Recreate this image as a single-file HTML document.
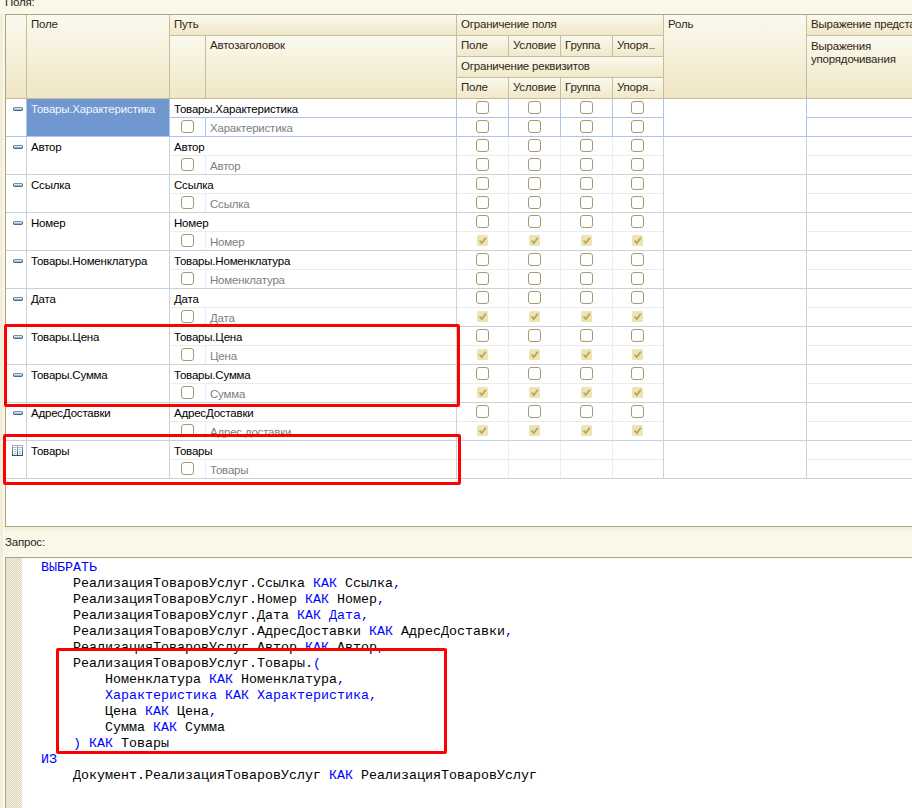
<!DOCTYPE html><html><head><meta charset="utf-8"><style>
*{margin:0;padding:0;box-sizing:border-box}
html,body{width:912px;height:808px;overflow:hidden;background:#FAF8E9;position:relative;font-family:"Liberation Sans",sans-serif;font-size:11.5px;letter-spacing:-0.2px;color:#000}
div{position:absolute}
.h{background:linear-gradient(#FAF9EE,#EFE6C5);color:#2E2616;white-space:nowrap;overflow:hidden}
.hs{background:linear-gradient(#FAF9EE,#F0E8C9);color:#2E2616;white-space:nowrap;overflow:hidden}
.t{white-space:nowrap;line-height:15px}
.g{color:#7E7E7E}
.cb{width:13px;height:13px;border:1.5px solid #A39A72;border-radius:3px;background:#fff}
.ck{width:11px;height:11px;background:#EDE4B2;border-radius:1.5px}
.ln{background:#C9D1DA}
.ll{background:#ECECEC}
.code{font-family:"Liberation Mono",monospace;font-size:13.333px;letter-spacing:0;line-height:16px;white-space:pre;color:#000}
.k{color:#0000FF}
.red{border:3px solid #FF0000;border-radius:2px}
</style></head><body>
<div class="t" style="left:5px;top:-5px;color:#2A2418">Поля:</div>
<div style="left:0;top:14px;width:3px;height:794px;background:#F1EEDB"></div>
<div style="left:5px;top:14px;width:907px;height:513px;background:#fff;border:1px solid #ADA37D;border-right:none"></div>
<div class="h" style="left:6px;top:15px;width:21px;height:84px;border-right:1px solid #C7BD9A;border-bottom:1px solid #C7BD9A;"></div>
<div class="h" style="left:27px;top:15px;width:143px;height:84px;border-right:1px solid #C7BD9A;border-bottom:1px solid #C7BD9A;"><div class="t" style="left:4px;top:2px">Поле</div></div>
<div class="hs" style="left:170px;top:15px;width:287px;height:21px;border-right:1px solid #C7BD9A;border-bottom:1px solid #C7BD9A;"><div class="t" style="left:4px;top:2px">Путь</div></div>
<div class="h" style="left:170px;top:36px;width:36px;height:63px;border-right:1px solid #C7BD9A;border-bottom:1px solid #C7BD9A;"></div>
<div class="h" style="left:206px;top:36px;width:251px;height:63px;border-right:1px solid #C7BD9A;border-bottom:1px solid #C7BD9A;"><div class="t" style="left:4px;top:2px">Автозаголовок</div></div>
<div class="hs" style="left:457px;top:15px;width:207px;height:21px;border-right:1px solid #C7BD9A;border-bottom:1px solid #C7BD9A;"><div class="t" style="left:4px;top:2px">Ограничение поля</div></div>
<div class="hs" style="left:457px;top:36px;width:52px;height:21px;border-right:1px solid #C7BD9A;border-bottom:1px solid #C7BD9A;"><div class="t" style="left:4px;top:2px">Поле</div></div>
<div class="hs" style="left:509px;top:36px;width:52px;height:21px;border-right:1px solid #C7BD9A;border-bottom:1px solid #C7BD9A;"><div class="t" style="left:4px;top:2px">Условие</div></div>
<div class="hs" style="left:561px;top:36px;width:52px;height:21px;border-right:1px solid #C7BD9A;border-bottom:1px solid #C7BD9A;"><div class="t" style="left:4px;top:2px">Группа</div></div>
<div class="hs" style="left:613px;top:36px;width:51px;height:21px;border-right:1px solid #C7BD9A;border-bottom:1px solid #C7BD9A;"><div class="t" style="left:4px;top:2px">Упоря<span style="display:inline-block;width:6px;height:1px;background:#A89C80;vertical-align:baseline;margin-left:1px"></span></div></div>
<div class="hs" style="left:457px;top:57px;width:207px;height:21px;border-right:1px solid #C7BD9A;border-bottom:1px solid #C7BD9A;"><div class="t" style="left:4px;top:2px">Ограничение реквизитов</div></div>
<div class="hs" style="left:457px;top:78px;width:52px;height:21px;border-right:1px solid #C7BD9A;border-bottom:1px solid #C7BD9A;"><div class="t" style="left:4px;top:2px">Поле</div></div>
<div class="hs" style="left:509px;top:78px;width:52px;height:21px;border-right:1px solid #C7BD9A;border-bottom:1px solid #C7BD9A;"><div class="t" style="left:4px;top:2px">Условие</div></div>
<div class="hs" style="left:561px;top:78px;width:52px;height:21px;border-right:1px solid #C7BD9A;border-bottom:1px solid #C7BD9A;"><div class="t" style="left:4px;top:2px">Группа</div></div>
<div class="hs" style="left:613px;top:78px;width:51px;height:21px;border-right:1px solid #C7BD9A;border-bottom:1px solid #C7BD9A;"><div class="t" style="left:4px;top:2px">Упоря<span style="display:inline-block;width:6px;height:1px;background:#A89C80;vertical-align:baseline;margin-left:1px"></span></div></div>
<div class="h" style="left:664px;top:15px;width:143px;height:84px;border-right:1px solid #C7BD9A;border-bottom:1px solid #C7BD9A;"><div class="t" style="left:4px;top:2px">Роль</div></div>
<div class="hs" style="left:807px;top:15px;width:114px;height:21px;border-right:1px solid #C7BD9A;border-bottom:1px solid #C7BD9A;"><div class="t" style="left:4px;top:2px">Выражение представления</div></div>
<div class="h" style="left:807px;top:36px;width:114px;height:63px;border-bottom:1px solid #C7BD9A"><div class="t" style="left:4px;top:4px;line-height:13px">Выражения<br>упорядочивания</div></div>
<div style="left:6px;top:136px;width:906px;height:1px;background:#ABC6EA"></div>
<div style="left:170px;top:117px;width:493px;height:1px;background:#ABC6EA"></div>
<div style="left:807px;top:117px;width:105px;height:1px;background:#ABC6EA"></div>
<div style="left:26px;top:99px;width:1px;height:37px;background:#ABC6EA"></div>
<div style="left:169px;top:99px;width:1px;height:37px;background:#ABC6EA"></div>
<div style="left:456px;top:99px;width:1px;height:37px;background:#ABC6EA"></div>
<div style="left:663px;top:99px;width:1px;height:37px;background:#ABC6EA"></div>
<div style="left:806px;top:99px;width:1px;height:37px;background:#ABC6EA"></div>
<div style="left:508px;top:99px;width:1px;height:37px;background:#ABC6EA"></div>
<div style="left:560px;top:99px;width:1px;height:37px;background:#ABC6EA"></div>
<div style="left:612px;top:99px;width:1px;height:37px;background:#ABC6EA"></div>
<div style="left:205px;top:118px;width:1px;height:18px;background:#ABC6EA"></div>
<div style="left:27px;top:99px;width:142px;height:37px;background:#6E98CF"></div>
<svg style="position:absolute;left:13px;top:107px" width="10" height="4" shape-rendering="crispEdges"><rect x="1" y="0" width="8" height="1" fill="#7591AB"/><rect x="0" y="1" width="1" height="2" fill="#56728E"/><rect x="9" y="1" width="1" height="2" fill="#56728E"/><rect x="1" y="1" width="8" height="1" fill="#D9E6F2"/><rect x="1" y="2" width="8" height="1" fill="#9BB3C9"/><rect x="1" y="3" width="8" height="1" fill="#4E6B87"/><rect x="0" y="0" width="1" height="1" fill="#C5D0DA"/><rect x="9" y="0" width="1" height="1" fill="#C5D0DA"/><rect x="0" y="3" width="1" height="1" fill="#B5C2CF"/><rect x="9" y="3" width="1" height="1" fill="#B5C2CF"/></svg>
<div class="t" style="left:31px;top:102px;color:#F4F7FC">Товары.Характеристика</div>
<div class="t" style="left:174px;top:102px">Товары.Характеристика</div>
<div class="t g" style="left:210px;top:121px">Характеристика</div>
<div class="cb" style="left:181px;top:120px"></div>
<div class="cb" style="left:476px;top:101px"></div>
<div class="cb" style="left:528px;top:101px"></div>
<div class="cb" style="left:580px;top:101px"></div>
<div class="cb" style="left:631px;top:101px"></div>
<div class="cb" style="left:476px;top:120px"></div>
<div class="cb" style="left:528px;top:120px"></div>
<div class="cb" style="left:580px;top:120px"></div>
<div class="cb" style="left:631px;top:120px"></div>
<div style="left:6px;top:174px;width:906px;height:1px;background:#C9D1DA"></div>
<div style="left:170px;top:155px;width:493px;height:1px;background:#ECECEC"></div>
<div style="left:807px;top:155px;width:105px;height:1px;background:#ECECEC"></div>
<div style="left:26px;top:137px;width:1px;height:37px;background:#C9D1DA"></div>
<div style="left:169px;top:137px;width:1px;height:37px;background:#C9D1DA"></div>
<div style="left:456px;top:137px;width:1px;height:37px;background:#C9D1DA"></div>
<div style="left:663px;top:137px;width:1px;height:37px;background:#C9D1DA"></div>
<div style="left:806px;top:137px;width:1px;height:37px;background:#C9D1DA"></div>
<div style="left:508px;top:137px;width:1px;height:37px;background:#ECECEC"></div>
<div style="left:560px;top:137px;width:1px;height:37px;background:#ECECEC"></div>
<div style="left:612px;top:137px;width:1px;height:37px;background:#ECECEC"></div>
<div style="left:205px;top:156px;width:1px;height:18px;background:#ECECEC"></div>
<svg style="position:absolute;left:13px;top:145px" width="10" height="4" shape-rendering="crispEdges"><rect x="1" y="0" width="8" height="1" fill="#7591AB"/><rect x="0" y="1" width="1" height="2" fill="#56728E"/><rect x="9" y="1" width="1" height="2" fill="#56728E"/><rect x="1" y="1" width="8" height="1" fill="#D9E6F2"/><rect x="1" y="2" width="8" height="1" fill="#9BB3C9"/><rect x="1" y="3" width="8" height="1" fill="#4E6B87"/><rect x="0" y="0" width="1" height="1" fill="#C5D0DA"/><rect x="9" y="0" width="1" height="1" fill="#C5D0DA"/><rect x="0" y="3" width="1" height="1" fill="#B5C2CF"/><rect x="9" y="3" width="1" height="1" fill="#B5C2CF"/></svg>
<div class="t" style="left:31px;top:140px;color:#000">Автор</div>
<div class="t" style="left:174px;top:140px">Автор</div>
<div class="t g" style="left:210px;top:159px">Автор</div>
<div class="cb" style="left:181px;top:158px"></div>
<div class="cb" style="left:476px;top:139px"></div>
<div class="cb" style="left:528px;top:139px"></div>
<div class="cb" style="left:580px;top:139px"></div>
<div class="cb" style="left:631px;top:139px"></div>
<div class="cb" style="left:476px;top:158px"></div>
<div class="cb" style="left:528px;top:158px"></div>
<div class="cb" style="left:580px;top:158px"></div>
<div class="cb" style="left:631px;top:158px"></div>
<div style="left:6px;top:212px;width:906px;height:1px;background:#C9D1DA"></div>
<div style="left:170px;top:193px;width:493px;height:1px;background:#ECECEC"></div>
<div style="left:807px;top:193px;width:105px;height:1px;background:#ECECEC"></div>
<div style="left:26px;top:175px;width:1px;height:37px;background:#C9D1DA"></div>
<div style="left:169px;top:175px;width:1px;height:37px;background:#C9D1DA"></div>
<div style="left:456px;top:175px;width:1px;height:37px;background:#C9D1DA"></div>
<div style="left:663px;top:175px;width:1px;height:37px;background:#C9D1DA"></div>
<div style="left:806px;top:175px;width:1px;height:37px;background:#C9D1DA"></div>
<div style="left:508px;top:175px;width:1px;height:37px;background:#ECECEC"></div>
<div style="left:560px;top:175px;width:1px;height:37px;background:#ECECEC"></div>
<div style="left:612px;top:175px;width:1px;height:37px;background:#ECECEC"></div>
<div style="left:205px;top:194px;width:1px;height:18px;background:#ECECEC"></div>
<svg style="position:absolute;left:13px;top:183px" width="10" height="4" shape-rendering="crispEdges"><rect x="1" y="0" width="8" height="1" fill="#7591AB"/><rect x="0" y="1" width="1" height="2" fill="#56728E"/><rect x="9" y="1" width="1" height="2" fill="#56728E"/><rect x="1" y="1" width="8" height="1" fill="#D9E6F2"/><rect x="1" y="2" width="8" height="1" fill="#9BB3C9"/><rect x="1" y="3" width="8" height="1" fill="#4E6B87"/><rect x="0" y="0" width="1" height="1" fill="#C5D0DA"/><rect x="9" y="0" width="1" height="1" fill="#C5D0DA"/><rect x="0" y="3" width="1" height="1" fill="#B5C2CF"/><rect x="9" y="3" width="1" height="1" fill="#B5C2CF"/></svg>
<div class="t" style="left:31px;top:178px;color:#000">Ссылка</div>
<div class="t" style="left:174px;top:178px">Ссылка</div>
<div class="t g" style="left:210px;top:197px">Ссылка</div>
<div class="cb" style="left:181px;top:196px"></div>
<div class="cb" style="left:476px;top:177px"></div>
<div class="cb" style="left:528px;top:177px"></div>
<div class="cb" style="left:580px;top:177px"></div>
<div class="cb" style="left:631px;top:177px"></div>
<div class="cb" style="left:476px;top:196px"></div>
<div class="cb" style="left:528px;top:196px"></div>
<div class="cb" style="left:580px;top:196px"></div>
<div class="cb" style="left:631px;top:196px"></div>
<div style="left:6px;top:250px;width:906px;height:1px;background:#C9D1DA"></div>
<div style="left:170px;top:231px;width:493px;height:1px;background:#ECECEC"></div>
<div style="left:807px;top:231px;width:105px;height:1px;background:#ECECEC"></div>
<div style="left:26px;top:213px;width:1px;height:37px;background:#C9D1DA"></div>
<div style="left:169px;top:213px;width:1px;height:37px;background:#C9D1DA"></div>
<div style="left:456px;top:213px;width:1px;height:37px;background:#C9D1DA"></div>
<div style="left:663px;top:213px;width:1px;height:37px;background:#C9D1DA"></div>
<div style="left:806px;top:213px;width:1px;height:37px;background:#C9D1DA"></div>
<div style="left:508px;top:213px;width:1px;height:37px;background:#ECECEC"></div>
<div style="left:560px;top:213px;width:1px;height:37px;background:#ECECEC"></div>
<div style="left:612px;top:213px;width:1px;height:37px;background:#ECECEC"></div>
<div style="left:205px;top:232px;width:1px;height:18px;background:#ECECEC"></div>
<svg style="position:absolute;left:13px;top:221px" width="10" height="4" shape-rendering="crispEdges"><rect x="1" y="0" width="8" height="1" fill="#7591AB"/><rect x="0" y="1" width="1" height="2" fill="#56728E"/><rect x="9" y="1" width="1" height="2" fill="#56728E"/><rect x="1" y="1" width="8" height="1" fill="#D9E6F2"/><rect x="1" y="2" width="8" height="1" fill="#9BB3C9"/><rect x="1" y="3" width="8" height="1" fill="#4E6B87"/><rect x="0" y="0" width="1" height="1" fill="#C5D0DA"/><rect x="9" y="0" width="1" height="1" fill="#C5D0DA"/><rect x="0" y="3" width="1" height="1" fill="#B5C2CF"/><rect x="9" y="3" width="1" height="1" fill="#B5C2CF"/></svg>
<div class="t" style="left:31px;top:216px;color:#000">Номер</div>
<div class="t" style="left:174px;top:216px">Номер</div>
<div class="t g" style="left:210px;top:235px">Номер</div>
<div class="cb" style="left:181px;top:234px"></div>
<div class="cb" style="left:476px;top:215px"></div>
<div class="cb" style="left:528px;top:215px"></div>
<div class="cb" style="left:580px;top:215px"></div>
<div class="cb" style="left:631px;top:215px"></div>
<div class="ck" style="left:477px;top:235px"><svg width="11" height="11" style="position:absolute;left:0;top:0"><path d="M2.5 5.5 L4.8 8 L8.8 2.8" fill="none" stroke="#B3A462" stroke-width="1.8"/></svg></div>
<div class="ck" style="left:529px;top:235px"><svg width="11" height="11" style="position:absolute;left:0;top:0"><path d="M2.5 5.5 L4.8 8 L8.8 2.8" fill="none" stroke="#B3A462" stroke-width="1.8"/></svg></div>
<div class="ck" style="left:581px;top:235px"><svg width="11" height="11" style="position:absolute;left:0;top:0"><path d="M2.5 5.5 L4.8 8 L8.8 2.8" fill="none" stroke="#B3A462" stroke-width="1.8"/></svg></div>
<div class="ck" style="left:632px;top:235px"><svg width="11" height="11" style="position:absolute;left:0;top:0"><path d="M2.5 5.5 L4.8 8 L8.8 2.8" fill="none" stroke="#B3A462" stroke-width="1.8"/></svg></div>
<div style="left:6px;top:288px;width:906px;height:1px;background:#C9D1DA"></div>
<div style="left:170px;top:269px;width:493px;height:1px;background:#ECECEC"></div>
<div style="left:807px;top:269px;width:105px;height:1px;background:#ECECEC"></div>
<div style="left:26px;top:251px;width:1px;height:37px;background:#C9D1DA"></div>
<div style="left:169px;top:251px;width:1px;height:37px;background:#C9D1DA"></div>
<div style="left:456px;top:251px;width:1px;height:37px;background:#C9D1DA"></div>
<div style="left:663px;top:251px;width:1px;height:37px;background:#C9D1DA"></div>
<div style="left:806px;top:251px;width:1px;height:37px;background:#C9D1DA"></div>
<div style="left:508px;top:251px;width:1px;height:37px;background:#ECECEC"></div>
<div style="left:560px;top:251px;width:1px;height:37px;background:#ECECEC"></div>
<div style="left:612px;top:251px;width:1px;height:37px;background:#ECECEC"></div>
<div style="left:205px;top:270px;width:1px;height:18px;background:#ECECEC"></div>
<svg style="position:absolute;left:13px;top:259px" width="10" height="4" shape-rendering="crispEdges"><rect x="1" y="0" width="8" height="1" fill="#7591AB"/><rect x="0" y="1" width="1" height="2" fill="#56728E"/><rect x="9" y="1" width="1" height="2" fill="#56728E"/><rect x="1" y="1" width="8" height="1" fill="#D9E6F2"/><rect x="1" y="2" width="8" height="1" fill="#9BB3C9"/><rect x="1" y="3" width="8" height="1" fill="#4E6B87"/><rect x="0" y="0" width="1" height="1" fill="#C5D0DA"/><rect x="9" y="0" width="1" height="1" fill="#C5D0DA"/><rect x="0" y="3" width="1" height="1" fill="#B5C2CF"/><rect x="9" y="3" width="1" height="1" fill="#B5C2CF"/></svg>
<div class="t" style="left:31px;top:254px;color:#000">Товары.Номенклатура</div>
<div class="t" style="left:174px;top:254px">Товары.Номенклатура</div>
<div class="t g" style="left:210px;top:273px">Номенклатура</div>
<div class="cb" style="left:181px;top:272px"></div>
<div class="cb" style="left:476px;top:253px"></div>
<div class="cb" style="left:528px;top:253px"></div>
<div class="cb" style="left:580px;top:253px"></div>
<div class="cb" style="left:631px;top:253px"></div>
<div class="cb" style="left:476px;top:272px"></div>
<div class="cb" style="left:528px;top:272px"></div>
<div class="cb" style="left:580px;top:272px"></div>
<div class="cb" style="left:631px;top:272px"></div>
<div style="left:6px;top:326px;width:906px;height:1px;background:#C9D1DA"></div>
<div style="left:170px;top:307px;width:493px;height:1px;background:#ECECEC"></div>
<div style="left:807px;top:307px;width:105px;height:1px;background:#ECECEC"></div>
<div style="left:26px;top:289px;width:1px;height:37px;background:#C9D1DA"></div>
<div style="left:169px;top:289px;width:1px;height:37px;background:#C9D1DA"></div>
<div style="left:456px;top:289px;width:1px;height:37px;background:#C9D1DA"></div>
<div style="left:663px;top:289px;width:1px;height:37px;background:#C9D1DA"></div>
<div style="left:806px;top:289px;width:1px;height:37px;background:#C9D1DA"></div>
<div style="left:508px;top:289px;width:1px;height:37px;background:#ECECEC"></div>
<div style="left:560px;top:289px;width:1px;height:37px;background:#ECECEC"></div>
<div style="left:612px;top:289px;width:1px;height:37px;background:#ECECEC"></div>
<div style="left:205px;top:308px;width:1px;height:18px;background:#ECECEC"></div>
<svg style="position:absolute;left:13px;top:297px" width="10" height="4" shape-rendering="crispEdges"><rect x="1" y="0" width="8" height="1" fill="#7591AB"/><rect x="0" y="1" width="1" height="2" fill="#56728E"/><rect x="9" y="1" width="1" height="2" fill="#56728E"/><rect x="1" y="1" width="8" height="1" fill="#D9E6F2"/><rect x="1" y="2" width="8" height="1" fill="#9BB3C9"/><rect x="1" y="3" width="8" height="1" fill="#4E6B87"/><rect x="0" y="0" width="1" height="1" fill="#C5D0DA"/><rect x="9" y="0" width="1" height="1" fill="#C5D0DA"/><rect x="0" y="3" width="1" height="1" fill="#B5C2CF"/><rect x="9" y="3" width="1" height="1" fill="#B5C2CF"/></svg>
<div class="t" style="left:31px;top:292px;color:#000">Дата</div>
<div class="t" style="left:174px;top:292px">Дата</div>
<div class="t g" style="left:210px;top:311px">Дата</div>
<div class="cb" style="left:181px;top:310px"></div>
<div class="cb" style="left:476px;top:291px"></div>
<div class="cb" style="left:528px;top:291px"></div>
<div class="cb" style="left:580px;top:291px"></div>
<div class="cb" style="left:631px;top:291px"></div>
<div class="ck" style="left:477px;top:311px"><svg width="11" height="11" style="position:absolute;left:0;top:0"><path d="M2.5 5.5 L4.8 8 L8.8 2.8" fill="none" stroke="#B3A462" stroke-width="1.8"/></svg></div>
<div class="ck" style="left:529px;top:311px"><svg width="11" height="11" style="position:absolute;left:0;top:0"><path d="M2.5 5.5 L4.8 8 L8.8 2.8" fill="none" stroke="#B3A462" stroke-width="1.8"/></svg></div>
<div class="ck" style="left:581px;top:311px"><svg width="11" height="11" style="position:absolute;left:0;top:0"><path d="M2.5 5.5 L4.8 8 L8.8 2.8" fill="none" stroke="#B3A462" stroke-width="1.8"/></svg></div>
<div class="ck" style="left:632px;top:311px"><svg width="11" height="11" style="position:absolute;left:0;top:0"><path d="M2.5 5.5 L4.8 8 L8.8 2.8" fill="none" stroke="#B3A462" stroke-width="1.8"/></svg></div>
<div style="left:6px;top:364px;width:906px;height:1px;background:#C9D1DA"></div>
<div style="left:170px;top:345px;width:493px;height:1px;background:#ECECEC"></div>
<div style="left:807px;top:345px;width:105px;height:1px;background:#ECECEC"></div>
<div style="left:26px;top:327px;width:1px;height:37px;background:#C9D1DA"></div>
<div style="left:169px;top:327px;width:1px;height:37px;background:#C9D1DA"></div>
<div style="left:456px;top:327px;width:1px;height:37px;background:#C9D1DA"></div>
<div style="left:663px;top:327px;width:1px;height:37px;background:#C9D1DA"></div>
<div style="left:806px;top:327px;width:1px;height:37px;background:#C9D1DA"></div>
<div style="left:508px;top:327px;width:1px;height:37px;background:#ECECEC"></div>
<div style="left:560px;top:327px;width:1px;height:37px;background:#ECECEC"></div>
<div style="left:612px;top:327px;width:1px;height:37px;background:#ECECEC"></div>
<div style="left:205px;top:346px;width:1px;height:18px;background:#ECECEC"></div>
<svg style="position:absolute;left:13px;top:335px" width="10" height="4" shape-rendering="crispEdges"><rect x="1" y="0" width="8" height="1" fill="#7591AB"/><rect x="0" y="1" width="1" height="2" fill="#56728E"/><rect x="9" y="1" width="1" height="2" fill="#56728E"/><rect x="1" y="1" width="8" height="1" fill="#D9E6F2"/><rect x="1" y="2" width="8" height="1" fill="#9BB3C9"/><rect x="1" y="3" width="8" height="1" fill="#4E6B87"/><rect x="0" y="0" width="1" height="1" fill="#C5D0DA"/><rect x="9" y="0" width="1" height="1" fill="#C5D0DA"/><rect x="0" y="3" width="1" height="1" fill="#B5C2CF"/><rect x="9" y="3" width="1" height="1" fill="#B5C2CF"/></svg>
<div class="t" style="left:31px;top:330px;color:#000">Товары.Цена</div>
<div class="t" style="left:174px;top:330px">Товары.Цена</div>
<div class="t g" style="left:210px;top:349px">Цена</div>
<div class="cb" style="left:181px;top:348px"></div>
<div class="cb" style="left:476px;top:329px"></div>
<div class="cb" style="left:528px;top:329px"></div>
<div class="cb" style="left:580px;top:329px"></div>
<div class="cb" style="left:631px;top:329px"></div>
<div class="ck" style="left:477px;top:349px"><svg width="11" height="11" style="position:absolute;left:0;top:0"><path d="M2.5 5.5 L4.8 8 L8.8 2.8" fill="none" stroke="#B3A462" stroke-width="1.8"/></svg></div>
<div class="ck" style="left:529px;top:349px"><svg width="11" height="11" style="position:absolute;left:0;top:0"><path d="M2.5 5.5 L4.8 8 L8.8 2.8" fill="none" stroke="#B3A462" stroke-width="1.8"/></svg></div>
<div class="ck" style="left:581px;top:349px"><svg width="11" height="11" style="position:absolute;left:0;top:0"><path d="M2.5 5.5 L4.8 8 L8.8 2.8" fill="none" stroke="#B3A462" stroke-width="1.8"/></svg></div>
<div class="ck" style="left:632px;top:349px"><svg width="11" height="11" style="position:absolute;left:0;top:0"><path d="M2.5 5.5 L4.8 8 L8.8 2.8" fill="none" stroke="#B3A462" stroke-width="1.8"/></svg></div>
<div style="left:6px;top:402px;width:906px;height:1px;background:#C9D1DA"></div>
<div style="left:170px;top:383px;width:493px;height:1px;background:#ECECEC"></div>
<div style="left:807px;top:383px;width:105px;height:1px;background:#ECECEC"></div>
<div style="left:26px;top:365px;width:1px;height:37px;background:#C9D1DA"></div>
<div style="left:169px;top:365px;width:1px;height:37px;background:#C9D1DA"></div>
<div style="left:456px;top:365px;width:1px;height:37px;background:#C9D1DA"></div>
<div style="left:663px;top:365px;width:1px;height:37px;background:#C9D1DA"></div>
<div style="left:806px;top:365px;width:1px;height:37px;background:#C9D1DA"></div>
<div style="left:508px;top:365px;width:1px;height:37px;background:#ECECEC"></div>
<div style="left:560px;top:365px;width:1px;height:37px;background:#ECECEC"></div>
<div style="left:612px;top:365px;width:1px;height:37px;background:#ECECEC"></div>
<div style="left:205px;top:384px;width:1px;height:18px;background:#ECECEC"></div>
<svg style="position:absolute;left:13px;top:373px" width="10" height="4" shape-rendering="crispEdges"><rect x="1" y="0" width="8" height="1" fill="#7591AB"/><rect x="0" y="1" width="1" height="2" fill="#56728E"/><rect x="9" y="1" width="1" height="2" fill="#56728E"/><rect x="1" y="1" width="8" height="1" fill="#D9E6F2"/><rect x="1" y="2" width="8" height="1" fill="#9BB3C9"/><rect x="1" y="3" width="8" height="1" fill="#4E6B87"/><rect x="0" y="0" width="1" height="1" fill="#C5D0DA"/><rect x="9" y="0" width="1" height="1" fill="#C5D0DA"/><rect x="0" y="3" width="1" height="1" fill="#B5C2CF"/><rect x="9" y="3" width="1" height="1" fill="#B5C2CF"/></svg>
<div class="t" style="left:31px;top:368px;color:#000">Товары.Сумма</div>
<div class="t" style="left:174px;top:368px">Товары.Сумма</div>
<div class="t g" style="left:210px;top:387px">Сумма</div>
<div class="cb" style="left:181px;top:386px"></div>
<div class="cb" style="left:476px;top:367px"></div>
<div class="cb" style="left:528px;top:367px"></div>
<div class="cb" style="left:580px;top:367px"></div>
<div class="cb" style="left:631px;top:367px"></div>
<div class="ck" style="left:477px;top:387px"><svg width="11" height="11" style="position:absolute;left:0;top:0"><path d="M2.5 5.5 L4.8 8 L8.8 2.8" fill="none" stroke="#B3A462" stroke-width="1.8"/></svg></div>
<div class="ck" style="left:529px;top:387px"><svg width="11" height="11" style="position:absolute;left:0;top:0"><path d="M2.5 5.5 L4.8 8 L8.8 2.8" fill="none" stroke="#B3A462" stroke-width="1.8"/></svg></div>
<div class="ck" style="left:581px;top:387px"><svg width="11" height="11" style="position:absolute;left:0;top:0"><path d="M2.5 5.5 L4.8 8 L8.8 2.8" fill="none" stroke="#B3A462" stroke-width="1.8"/></svg></div>
<div class="ck" style="left:632px;top:387px"><svg width="11" height="11" style="position:absolute;left:0;top:0"><path d="M2.5 5.5 L4.8 8 L8.8 2.8" fill="none" stroke="#B3A462" stroke-width="1.8"/></svg></div>
<div style="left:6px;top:440px;width:906px;height:1px;background:#C9D1DA"></div>
<div style="left:170px;top:421px;width:493px;height:1px;background:#ECECEC"></div>
<div style="left:807px;top:421px;width:105px;height:1px;background:#ECECEC"></div>
<div style="left:26px;top:403px;width:1px;height:37px;background:#C9D1DA"></div>
<div style="left:169px;top:403px;width:1px;height:37px;background:#C9D1DA"></div>
<div style="left:456px;top:403px;width:1px;height:37px;background:#C9D1DA"></div>
<div style="left:663px;top:403px;width:1px;height:37px;background:#C9D1DA"></div>
<div style="left:806px;top:403px;width:1px;height:37px;background:#C9D1DA"></div>
<div style="left:508px;top:403px;width:1px;height:37px;background:#ECECEC"></div>
<div style="left:560px;top:403px;width:1px;height:37px;background:#ECECEC"></div>
<div style="left:612px;top:403px;width:1px;height:37px;background:#ECECEC"></div>
<div style="left:205px;top:422px;width:1px;height:18px;background:#ECECEC"></div>
<svg style="position:absolute;left:13px;top:411px" width="10" height="4" shape-rendering="crispEdges"><rect x="1" y="0" width="8" height="1" fill="#7591AB"/><rect x="0" y="1" width="1" height="2" fill="#56728E"/><rect x="9" y="1" width="1" height="2" fill="#56728E"/><rect x="1" y="1" width="8" height="1" fill="#D9E6F2"/><rect x="1" y="2" width="8" height="1" fill="#9BB3C9"/><rect x="1" y="3" width="8" height="1" fill="#4E6B87"/><rect x="0" y="0" width="1" height="1" fill="#C5D0DA"/><rect x="9" y="0" width="1" height="1" fill="#C5D0DA"/><rect x="0" y="3" width="1" height="1" fill="#B5C2CF"/><rect x="9" y="3" width="1" height="1" fill="#B5C2CF"/></svg>
<div class="t" style="left:31px;top:406px;color:#000">АдресДоставки</div>
<div class="t" style="left:174px;top:406px">АдресДоставки</div>
<div class="t g" style="left:210px;top:425px">Адрес доставки</div>
<div class="cb" style="left:181px;top:424px"></div>
<div class="cb" style="left:476px;top:405px"></div>
<div class="cb" style="left:528px;top:405px"></div>
<div class="cb" style="left:580px;top:405px"></div>
<div class="cb" style="left:631px;top:405px"></div>
<div class="ck" style="left:477px;top:425px"><svg width="11" height="11" style="position:absolute;left:0;top:0"><path d="M2.5 5.5 L4.8 8 L8.8 2.8" fill="none" stroke="#B3A462" stroke-width="1.8"/></svg></div>
<div class="ck" style="left:529px;top:425px"><svg width="11" height="11" style="position:absolute;left:0;top:0"><path d="M2.5 5.5 L4.8 8 L8.8 2.8" fill="none" stroke="#B3A462" stroke-width="1.8"/></svg></div>
<div class="ck" style="left:581px;top:425px"><svg width="11" height="11" style="position:absolute;left:0;top:0"><path d="M2.5 5.5 L4.8 8 L8.8 2.8" fill="none" stroke="#B3A462" stroke-width="1.8"/></svg></div>
<div class="ck" style="left:632px;top:425px"><svg width="11" height="11" style="position:absolute;left:0;top:0"><path d="M2.5 5.5 L4.8 8 L8.8 2.8" fill="none" stroke="#B3A462" stroke-width="1.8"/></svg></div>
<div style="left:6px;top:478px;width:906px;height:1px;background:#C9D1DA"></div>
<div style="left:170px;top:459px;width:493px;height:1px;background:#ECECEC"></div>
<div style="left:807px;top:459px;width:105px;height:1px;background:#ECECEC"></div>
<div style="left:26px;top:441px;width:1px;height:37px;background:#C9D1DA"></div>
<div style="left:169px;top:441px;width:1px;height:37px;background:#C9D1DA"></div>
<div style="left:456px;top:441px;width:1px;height:37px;background:#C9D1DA"></div>
<div style="left:663px;top:441px;width:1px;height:37px;background:#C9D1DA"></div>
<div style="left:806px;top:441px;width:1px;height:37px;background:#C9D1DA"></div>
<div style="left:508px;top:441px;width:1px;height:37px;background:#ECECEC"></div>
<div style="left:560px;top:441px;width:1px;height:37px;background:#ECECEC"></div>
<div style="left:612px;top:441px;width:1px;height:37px;background:#ECECEC"></div>
<div style="left:205px;top:460px;width:1px;height:18px;background:#ECECEC"></div>
<svg style="position:absolute;left:12px;top:445px" width="11" height="11" viewBox="0 0 11 11" shape-rendering="crispEdges"><defs><linearGradient id="gb" x1="0" y1="0" x2="0" y2="1"><stop offset="0" stop-color="#A7B8CA"/><stop offset="1" stop-color="#2E4560"/></linearGradient><linearGradient id="gf" x1="0" y1="0" x2="0" y2="1"><stop offset="0" stop-color="#FFFFFF"/><stop offset="1" stop-color="#DDF3FA"/></linearGradient></defs><rect x="0" y="0" width="11" height="11" fill="url(#gb)"/><rect x="1" y="1" width="4" height="1" fill="#FFFFFF"/><rect x="6" y="1" width="4" height="1" fill="#FFFFFF"/><rect x="1" y="2" width="9" height="1" fill="#A9B9C9"/><rect x="1" y="3" width="4" height="7" fill="url(#gf)"/><rect x="6" y="3" width="4" height="7" fill="url(#gf)"/><rect x="2" y="4" width="2" height="1" fill="#B8C3CE"/><rect x="7" y="4" width="2" height="1" fill="#B8C3CE"/><rect x="2" y="6" width="2" height="1" fill="#B8C3CE"/><rect x="7" y="6" width="2" height="1" fill="#B8C3CE"/><rect x="2" y="8" width="2" height="1" fill="#B8C3CE"/><rect x="7" y="8" width="2" height="1" fill="#B8C3CE"/></svg>
<div class="t" style="left:31px;top:444px;color:#000">Товары</div>
<div class="t" style="left:174px;top:444px">Товары</div>
<div class="t g" style="left:210px;top:463px">Товары</div>
<div class="cb" style="left:181px;top:462px"></div>
<div style="left:5px;top:526px;width:907px;height:1px;background:#ADA37D"></div>
<div style="left:5px;top:527px;width:907px;height:4px;background:#F3F1DD"></div>
<div class="t" style="left:5px;top:535px;color:#2A2418">Запрос:</div>
<div style="left:5px;top:557px;width:907px;height:260px;background:#fff;border:1px solid #ADA37D;border-right:none"></div>
<div style="left:6px;top:558px;width:16px;height:250px;background-color:#fff;background-image:repeating-conic-gradient(#D9D5C0 0 25%,#F4F1DC 0 50%);background-size:2px 2px"></div>
<div class="code" style="left:41px;top:560px"><span class="k">ВЫБРАТЬ</span></div>
<div class="code" style="left:73px;top:576px">РеализацияТоваровУслуг.Ссылка <span class="k">КАК</span> Ссылка<span class="k">,</span></div>
<div class="code" style="left:73px;top:592px">РеализацияТоваровУслуг.Номер <span class="k">КАК</span> Номер<span class="k">,</span></div>
<div class="code" style="left:73px;top:608px">РеализацияТоваровУслуг.Дата <span class="k">КАК</span> <span class="k">Дата,</span></div>
<div class="code" style="left:73px;top:624px">РеализацияТоваровУслуг.АдресДоставки <span class="k">КАК</span> АдресДоставки<span class="k">,</span></div>
<div class="code" style="left:73px;top:640px">РеализацияТоваровУслуг.Автор <span class="k">КАК</span> Автор<span class="k">,</span></div>
<div class="code" style="left:73px;top:656px">РеализацияТоваровУслуг.Товары.<span class="k">(</span></div>
<div class="code" style="left:105px;top:672px">Номенклатура <span class="k">КАК</span> Номенклатура<span class="k">,</span></div>
<div class="code" style="left:105px;top:688px"><span class="k">Характеристика КАК Характеристика,</span></div>
<div class="code" style="left:105px;top:704px">Цена <span class="k">КАК</span> Цена<span class="k">,</span></div>
<div class="code" style="left:105px;top:720px">Сумма <span class="k">КАК</span> Сумма</div>
<div class="code" style="left:73px;top:736px"><span class="k">)</span> <span class="k">КАК</span> Товары</div>
<div class="code" style="left:41px;top:752px"><span class="k">ИЗ</span></div>
<div class="code" style="left:73px;top:768px">Документ.РеализацияТоваровУслуг <span class="k">КАК</span> РеализацияТоваровУслуг</div>
<div class="red" style="left:4px;top:324px;width:456px;height:83px"></div>
<div class="red" style="left:3px;top:434px;width:458px;height:51px"></div>
<div class="red" style="left:56px;top:648px;width:391px;height:106px"></div>
</body></html>
